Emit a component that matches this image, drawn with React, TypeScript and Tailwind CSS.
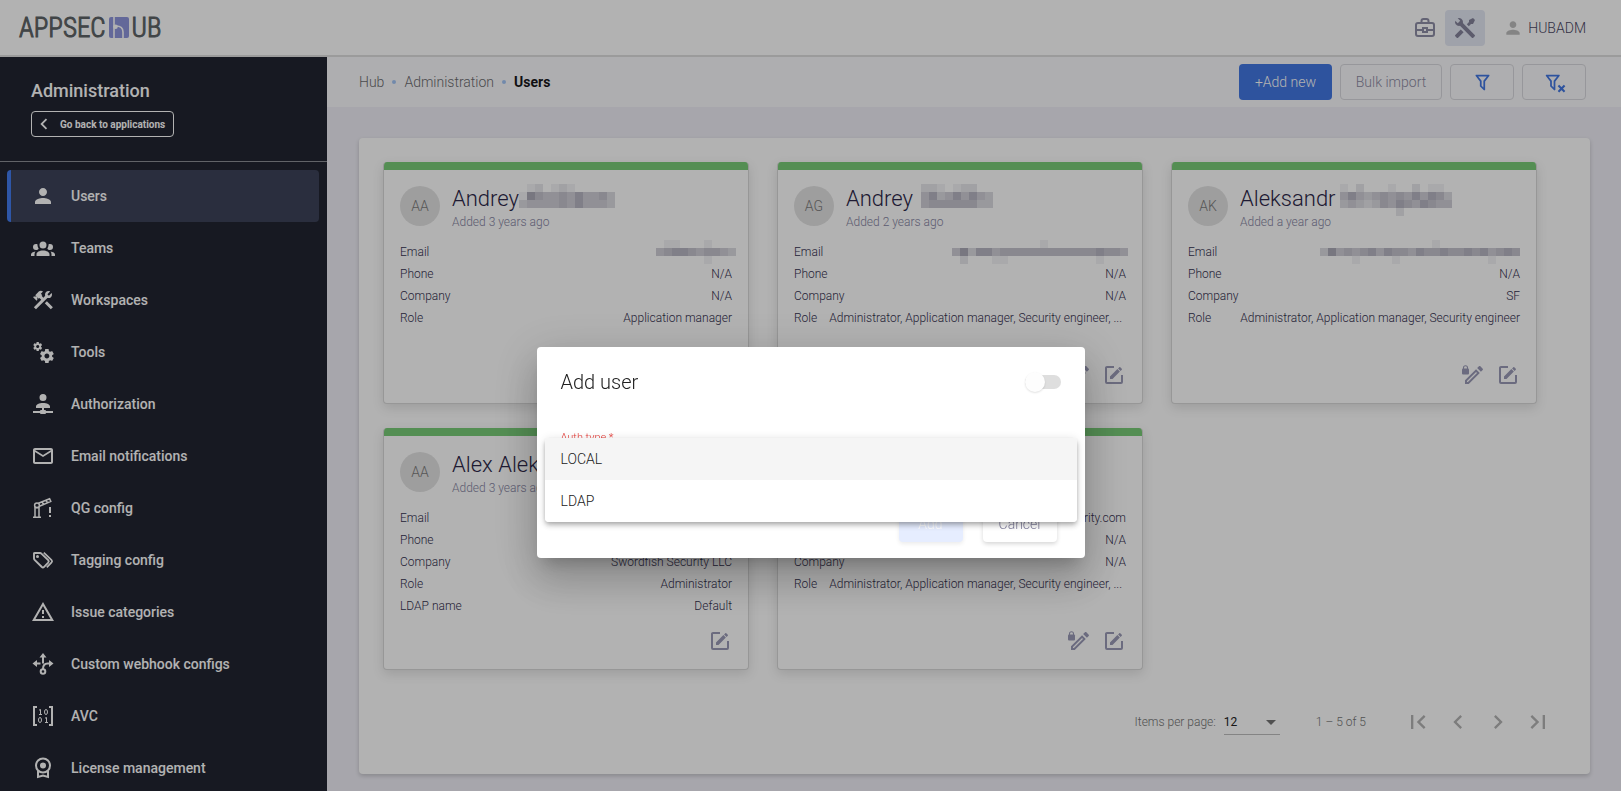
import { useState } from "react";
import type { ReactNode } from "react";
import {
  MdArrowDropDown,
  MdChevronLeft,
  MdChevronRight,
  MdFirstPage,
  MdLastPage,
  MdPerson,
  MdMailOutline,
} from "react-icons/md";

/* ---------- icons ---------- */

function Glyph({ d, size = 24, children }: { d?: string; size?: number; children?: ReactNode }) {
  return (
    <svg viewBox="0 0 24 24" width={size} height={size} fill="currentColor" aria-hidden="true" className="shrink-0">
      {d ? <path d={d} /> : null}
      {children}
    </svg>
  );
}

const ACCOUNT_GROUP =
  "M12,5.5A3.5,3.5 0 0,1 15.5,9A3.5,3.5 0 0,1 12,12.5A3.5,3.5 0 0,1 8.5,9A3.5,3.5 0 0,1 12,5.5M5,8C5.56,8 6.08,8.15 6.53,8.42C6.38,9.85 6.8,11.27 7.66,12.38C7.16,13.34 6.16,14 5,14A3,3 0 0,1 2,11A3,3 0 0,1 5,8M19,8A3,3 0 0,1 22,11A3,3 0 0,1 19,14C17.84,14 16.84,13.34 16.34,12.38C17.2,11.27 17.62,9.85 17.47,8.42C17.92,8.15 18.44,8 19,8M5.5,18.25C5.5,16.18 8.41,14.5 12,14.5C15.59,14.5 18.5,16.18 18.5,18.25V20H5.5V18.25M0,20V18.5C0,17.11 1.89,15.94 4.45,15.6C3.86,16.28 3.5,17.22 3.5,18.25V20H0M24,20H20.5V18.25C20.5,17.22 20.14,16.28 19.55,15.6C22.11,15.94 24,17.11 24,18.5V20Z";
const HAMMER_WRENCH =
  "M13.78 15.3L19.78 21.3L21.89 19.14L15.89 13.14L13.78 15.3M17.5 10.1C17.11 10.1 16.69 10.05 16.36 9.91L4.97 21.25L2.86 19.14L10.27 11.74L8.5 9.96L7.78 10.66L6.33 9.25V12.11L5.63 12.81L2.11 9.25L2.81 8.55H5.62L4.22 7.14L7.78 3.58C8.95 2.41 10.83 2.41 12 3.58L9.89 5.74L11.3 7.14L10.59 7.85L12.38 9.63L14.2 7.75C14.06 7.42 14 7 14 6.63C14 4.66 15.56 3.11 17.5 3.11C18.09 3.11 18.61 3.25 19.08 3.53L16.41 6.2L17.91 7.7L20.58 5.03C20.86 5.5 21 6 21 6.63C21 8.55 19.45 10.1 17.5 10.1Z";
const TOOLS =
  "M21.71 20.29L20.29 21.71A1 1 0 0 1 18.88 21.71L7 9.85A3.81 3.81 0 0 1 6 10A4 4 0 0 1 2.22 4.7L4.76 7.24L5.29 6.71L6.71 5.29L7.24 4.76L4.7 2.22A4 4 0 0 1 10 6A3.81 3.81 0 0 1 9.85 7L21.71 18.88A1 1 0 0 1 21.71 20.29M2.29 18.88A1 1 0 0 0 2.29 20.29L3.71 21.71A1 1 0 0 0 5.12 21.71L10.59 16.25L7.76 13.42M20 2L16 4V6L13.83 8.17L15.83 10.17L18 8H20L22 4Z";
const COGS =
  "M15.9,18.45C17.25,18.45 18.35,17.35 18.35,16C18.35,14.65 17.25,13.55 15.9,13.55C14.54,13.55 13.45,14.65 13.45,16C13.45,17.35 14.54,18.45 15.9,18.45M21.1,16.68L22.58,17.84C22.71,17.95 22.75,18.13 22.66,18.29L21.26,20.71C21.17,20.86 21,20.92 20.83,20.86L19.09,20.16C18.73,20.44 18.33,20.67 17.91,20.85L17.64,22.7C17.62,22.87 17.47,23 17.3,23H14.5C14.32,23 14.18,22.87 14.15,22.7L13.89,20.85C13.46,20.67 13.07,20.44 12.71,20.16L10.96,20.86C10.81,20.92 10.62,20.86 10.54,20.71L9.14,18.29C9.05,18.13 9.09,17.95 9.22,17.84L10.7,16.68L10.65,16L10.7,15.31L9.22,14.16C9.09,14.05 9.05,13.86 9.14,13.71L10.54,11.29C10.62,11.13 10.81,11.07 10.96,11.13L12.71,11.84C13.07,11.56 13.46,11.32 13.89,11.15L14.15,9.29C14.18,9.13 14.32,9 14.5,9H17.3C17.47,9 17.62,9.13 17.64,9.29L17.91,11.15C18.33,11.32 18.73,11.56 19.09,11.84L20.83,11.13C21,11.07 21.17,11.13 21.26,11.29L22.66,13.71C22.75,13.86 22.71,14.05 22.58,14.16L21.1,15.31L21.15,16L21.1,16.68M6.69,8.07C7.56,8.07 8.26,7.37 8.26,6.5C8.26,5.63 7.56,4.92 6.69,4.92A1.58,1.58 0 0,0 5.11,6.5C5.11,7.37 5.82,8.07 6.69,8.07M10.03,6.94L11,7.68C11.07,7.75 11.09,7.87 11.03,7.97L10.13,9.53C10.08,9.63 9.96,9.67 9.86,9.63L8.74,9.18L8,9.62L7.81,10.81C7.79,10.92 7.7,11 7.59,11H5.79C5.67,11 5.58,10.92 5.56,10.81L5.4,9.62L4.64,9.18L3.52,9.63C3.41,9.67 3.3,9.63 3.24,9.53L2.34,7.97C2.28,7.87 2.31,7.75 2.39,7.68L3.34,6.94L3.31,6.5L3.34,6.06L2.39,5.32C2.31,5.25 2.28,5.13 2.34,5.03L3.24,3.47C3.3,3.37 3.41,3.33 3.52,3.37L4.63,3.82L5.4,3.38L5.56,2.19C5.58,2.08 5.67,2 5.79,2H7.59C7.7,2 7.79,2.08 7.81,2.19L8,3.38L8.74,3.82L9.86,3.37C9.96,3.33 10.08,3.37 10.13,3.47L11.03,5.03C11.09,5.13 11.07,5.25 11,5.32L10.03,6.06L10.06,6.5L10.03,6.94Z";
const ACCOUNT_NETWORK =
  "M13,16V18H14A1,1 0 0,1 15,19H22V21H15A1,1 0 0,1 14,22H10A1,1 0 0,1 9,21H2V19H9A1,1 0 0,1 10,18H11V16H5V14.5C5,12.57 8.13,11 12,11C15.87,11 19,12.57 19,14.5V16H13M12,2A3.5,3.5 0 0,1 15.5,5.5A3.5,3.5 0 0,1 12,9A3.5,3.5 0 0,1 8.5,5.5A3.5,3.5 0 0,1 12,2Z";
const ALERT = "M12,2L1,21H23M12,6L19.53,19H4.47M11,10V14H13V10M11,16V18H13V16";
const FILTER =
  "M15,19.88C15.04,20.18 14.94,20.5 14.71,20.71C14.32,21.1 13.69,21.1 13.3,20.71L9.29,16.7C9.06,16.47 8.96,16.16 9,15.87V10.75L4.21,4.62C3.87,4.19 3.95,3.56 4.38,3.22C4.57,3.08 4.78,3 5,3H19C19.22,3 19.43,3.08 19.62,3.22C20.05,3.56 20.13,4.19 19.79,4.62L15,10.75V19.88M7.04,5L11,10.06V15.58L13,17.58V10.05L16.96,5H7.04Z";
const EDIT_BOX =
  "M5,3C3.89,3 3,3.89 3,5V19A2,2 0 0,0 5,21H19A2,2 0 0,0 21,19V12H19V19H5V5H12V3H5M17.78,4C17.61,4 17.43,4.07 17.3,4.2L16.08,5.41L18.58,7.91L19.8,6.7C20.06,6.44 20.06,6 19.8,5.75L18.25,4.2C18.12,4.07 17.95,4 17.78,4M15.37,6.12L8,13.5V16H10.5L17.87,8.62L15.37,6.12Z";
const PENCIL =
  "M14.06,9L15,9.94L5.92,19H5V18.08L14.06,9M17.66,3C17.41,3 17.15,3.1 16.96,3.29L15.13,5.12L18.88,8.87L20.71,7.04C21.1,6.65 21.1,6 20.71,5.63L18.37,3.29C18.17,3.09 17.92,3 17.66,3M14.06,6.19L3,17.25V21H6.75L17.81,9.94L14.06,6.19Z";

const BoomGateIcon = () => (
  <Glyph>
    <g fill="none" stroke="currentColor" strokeWidth="1.5">
      <path d="M2 21.2h8M4 21V11.5h4V21" />
      <circle cx="6" cy="9.3" r="2.4" />
      <path d="M7.4 7.2L18.6 2.8l1.2 2.6L8.4 10.2M11 6l1.6 2.2M15 4.4l1.5 2.2" />
    </g>
    <path d="M18 11h2v6h-2zM18 19h2v2h-2z" />
  </Glyph>
);

const TagsIcon = () => (
  <Glyph>
    <g fill="none" stroke="currentColor" strokeWidth="1.9" strokeLinejoin="round">
      <path d="M3 5.2v5.3c0 .5.2 1 .6 1.4l7 6.9c.8.7 1.8.7 2.5 0l4.1-4.1c.7-.8.7-1.8 0-2.5L10.4 5.6A2 2 0 0 0 9 5H4a1 1 0 0 0-1 .8z" />
      <path d="M12.8 4.6L20.6 12.2a1.6 1.6 0 0 1 0 2.2L15.8 19.4" strokeWidth="1.7" />
    </g>
    <circle cx="6.5" cy="8.5" r="1.5" />
  </Glyph>
);

const ForkIcon = () => (
  <Glyph>
    <path d="M12 1L8.5 5.5h7zM1.5 11.500L6 8v7zM22.5 11.500L18 8v7z" />
    <g fill="none" stroke="currentColor" strokeWidth="2">
      <path d="M12 5v6.5M6 11.5h3.5M18 11.500h-1.5C13.5 11.5 12 14 12 17" />
      <circle cx="12" cy="19.5" r="2.3" />
    </g>
  </Glyph>
);

const MatrixIcon = () => (
  <Glyph>
    <path d="M2 2h4v2H4v16h2v2H2zM22 2h-4v2h2v16h-2v2h4z" />
    <g fill="none" stroke="currentColor" strokeWidth="1">
      <ellipse cx="15" cy="8" rx="1.5" ry="2.5" />
      <ellipse cx="9" cy="16" rx="1.5" ry="2.5" />
      <path d="M8 6.200l1.5-.7v5M8 10.500h3M14 14.200l1.5-.7v5M14 18.500h3" />
    </g>
  </Glyph>
);

const LicenseIcon = () => (
  <Glyph>
    <circle cx="12" cy="9.5" r="7" fill="none" stroke="currentColor" strokeWidth="2" />
    <circle cx="12" cy="9.5" r="3" />
    <path d="M7 15v6l5-1.500 5 1.500v-6" fill="none" stroke="currentColor" strokeWidth="2" />
  </Glyph>
);

const ToolboxIcon = () => (
  <Glyph>
    <g fill="none" stroke="currentColor" strokeWidth="2">
      <path d="M8.500 7V5a2 2 0 0 1 2-2h3a2 2 0 0 1 2 2v2" />
      <rect x="3" y="7" width="18" height="13" rx="2" />
      <path d="M3 14h6.500M14.500 14H21" />
      <rect x="10" y="12" width="4" height="4" />
    </g>
  </Glyph>
);

const FilterOffIcon = () => (
  <svg viewBox="0 0 28 24" width="25" height="21" fill="currentColor" aria-hidden="true" className="shrink-0">
    <path d={FILTER} />
    <path d="M18.500 15.500l7 7M25.500 15.500l-7 7" stroke="currentColor" strokeWidth="2.400" />
  </svg>
);

const LockPencilIcon = () => (
  <Glyph d={PENCIL}>
    <rect x="0" y="5.5" width="7" height="6" rx="1" />
    <path d="M1.500 6V4.700a2 2 0 0 1 4 0V6" fill="none" stroke="currentColor" strokeWidth="1.1" />
  </Glyph>
);

const LogoMark = () => (
  <svg viewBox="0 0 20 21" width="20" height="21" aria-hidden="true" className="shrink-0">
    <rect width="20" height="21" rx="2" fill="#8f96dc" />
    <path d="M5 0v21M7 9c4.500 0 7 2 7 6v6" fill="none" stroke="#ffffff" strokeWidth="1.6" />
    <circle cx="6.5" cy="9.7" r="2.3" fill="#ffffff" />
  </svg>
);

/* Mosaic that hides private data: one digit per cell, 0 is clear, 9 is darkest. */
function Mosaic({ rows, className }: { rows: string[]; className?: string }) {
  const cols = rows[0].length;
  return (
    <svg
      width={cols * 8}
      height={rows.length * 8}
      viewBox={`0 0 ${cols} ${rows.length}`}
      shapeRendering="crispEdges"
      aria-hidden="true"
      className={"shrink-0 " + (className ?? "")}
    >
      {rows.flatMap((row, y) =>
        row
          .split("")
          .map((c, x) =>
            c === "0" ? null : (
              <rect key={`${x}-${y}`} x={x} y={y} width="1" height="1" fill="#55536f" fillOpacity={Number(c) * 0.07} />
            ),
          ),
      )}
    </svg>
  );
}

/* ---------- data ---------- */

const NAV: { label: string; icon: ReactNode }[] = [
  { label: "Users", icon: <MdPerson size={24} /> },
  { label: "Teams", icon: <Glyph d={ACCOUNT_GROUP} /> },
  { label: "Workspaces", icon: <Glyph d={HAMMER_WRENCH} /> },
  { label: "Tools", icon: <Glyph d={COGS} /> },
  { label: "Authorization", icon: <Glyph d={ACCOUNT_NETWORK} /> },
  { label: "Email notifications", icon: <MdMailOutline size={24} /> },
  { label: "QG config", icon: <BoomGateIcon /> },
  { label: "Tagging config", icon: <TagsIcon /> },
  { label: "Issue categories", icon: <Glyph d={ALERT} /> },
  { label: "Custom webhook configs", icon: <ForkIcon /> },
  { label: "AVC", icon: <MatrixIcon /> },
  { label: "License management", icon: <LicenseIcon /> },
];

type User = {
  initials: string;
  name: string;
  surname?: ReactNode;
  added: string;
  rows: [string, ReactNode][];
  locked?: boolean;
};

const ALL_ROLES = "Administrator, Application manager, Security engineer, ...";

const USERS: User[] = [
  {
    initials: "AA",
    name: "Andrey",
    surname: <Mosaic className="-mt-0.5" rows={["012012100000", "175445464453", "344445464443"]} />,
    added: "Added 3 years ago",
    rows: [
      ["Email", <Mosaic className="-mr-1" rows={["0110001000", "4566545543", "0000001000"]} />],
      ["Phone", "N/A"],
      ["Company", "N/A"],
      ["Role", "Application manager"],
    ],
  },
  {
    initials: "AG",
    name: "Andrey",
    surname: <Mosaic className="-mt-0.5 ml-2" rows={["221012200", "463464643", "455555533"]} />,
    added: "Added 2 years ago",
    rows: [
      ["Email", <Mosaic className="-mr-0.5" rows={["0000000000010000000000", "4736645555555555556554", "0200011000000000001000"]} />],
      ["Phone", "N/A"],
      ["Company", "N/A"],
      ["Role", ALL_ROLES],
    ],
    locked: true,
  },
  {
    initials: "AK",
    name: "Aleksandr",
    surname: (
      <Mosaic className="-mt-0.5 ml-1" rows={["10200010020110", "46434545464653", "34323546546544", "00000002000000"]} />
    ),
    added: "Added a year ago",
    rows: [
      ["Email", <Mosaic rows={["0000000000000010000000000", "3745456465546556556564565", "0000100001000000000001000"]} />],
      ["Phone", "N/A"],
      ["Company", "SF"],
      ["Role", "Administrator, Application manager, Security engineer"],
    ],
    locked: true,
  },
  {
    initials: "AA",
    name: "Alex Alek",
    added: "Added 3 years ago",
    rows: [
      ["Email", ""],
      ["Phone", ""],
      ["Company", "Swordfish Security LLC"],
      ["Role", "Administrator"],
      ["LDAP name", "Default"],
    ],
  },
  {
    initials: "",
    name: "",
    added: "",
    rows: [
      ["Email", "security.com"],
      ["Phone", "N/A"],
      ["Company", "N/A"],
      ["Role", ALL_ROLES],
    ],
    locked: true,
  },
];

/* ---------- parts ---------- */

function Header() {
  return (
    <header className="flex h-[57px] shrink-0 items-center border-b-2 border-[#dedede] bg-white pr-[35px] pl-[19px]">
      <a
        href="#home"
        aria-label="AppSec Hub"
        className="flex items-center gap-[3px] font-['Liberation_Sans_Narrow','Roboto_Condensed',Roboto,sans-serif] text-[27px] leading-6 text-[#5d6366] [-webkit-text-stroke:1px_#5d6366]"
      >
        APPSEC
        <LogoMark />
        UB
      </a>
      <div className="ml-auto flex items-center text-[#8f8ea6]">
        <button type="button" aria-label="Workspaces" className="flex h-9 w-10 items-center justify-center">
          <ToolboxIcon />
        </button>
        <button
          type="button"
          aria-label="Administration"
          className="flex h-9 w-10 items-center justify-center rounded bg-[#e4e8f4] text-[#84839b]"
        >
          <Glyph d={TOOLS} />
        </button>
        <button type="button" className="ml-[18px] flex items-center gap-[5px] text-sm text-[#4b4763]">
          <MdPerson size={20} className="text-[#bdbdbd]" />
          HUBADM
        </button>
      </div>
    </header>
  );
}

function Sidebar() {
  return (
    <aside className="flex w-[327px] shrink-0 flex-col overflow-hidden bg-[#222532] text-white">
      <div className="border-b border-[#8c8f96] px-[31px] pt-5 pb-6">
        <h1 className="text-lg leading-7 font-medium">Administration</h1>
        <button
          type="button"
          className="mt-1.5 flex h-[26px] w-[143px] items-center rounded border border-white pl-px text-[10px] font-bold"
        >
          <MdChevronLeft size={22} />
          <span className="ml-[5px]">Go back to applications</span>
        </button>
      </div>
      <nav className="flex flex-col pt-2 pr-2 pl-[7px]">
        {NAV.map((item, i) => (
          <a
            key={item.label}
            href="#section"
            aria-current={i === 0 ? "page" : undefined}
            className={
              "flex h-[52px] shrink-0 items-center gap-4 rounded border-l-4 pl-5 text-sm font-medium " +
              (i === 0 ? "border-[#427bf0] bg-[#3d4359]" : "border-transparent")
            }
          >
            {item.icon}
            {item.label}
          </a>
        ))}
      </nav>
    </aside>
  );
}

const OUTLINE = "flex h-9 items-center justify-center rounded border border-[#d9d9de] text-sm text-[#8d8ca4]";

function Toolbar() {
  return (
    <div className="flex h-[50px] shrink-0 items-center bg-[#fafafc] pr-[35px] pl-8">
      <nav aria-label="Breadcrumb" className="flex items-center gap-2 text-sm text-[#6c6c70]">
        <a href="#hub">Hub</a>
        <span className="size-1 rounded-full bg-[#a3c4f5]" />
        <a href="#administration">Administration</a>
        <span className="size-1 rounded-full bg-[#a3c4f5]" />
        <span className="font-bold text-[#18181b]">Users</span>
      </nav>
      <div className="ml-auto flex gap-2">
        <button type="button" className="h-9 w-[93px] rounded bg-[#4277e2] text-sm text-white">
          +Add new
        </button>
        <button type="button" className={OUTLINE + " w-[102px]"}>
          Bulk import
        </button>
        <button type="button" aria-label="Filter" className={OUTLINE + " w-16"}>
          <span className="text-[#4277e2]">
            <Glyph d={FILTER} size={21} />
          </span>
        </button>
        <button type="button" aria-label="Clear filter" className={OUTLINE + " w-16"}>
          <span className="text-[#4277e2]">
            <FilterOffIcon />
          </span>
        </button>
      </div>
    </div>
  );
}

function UserCard({ user }: { user: User }) {
  return (
    <article className="mr-7 flex min-h-[242px] flex-col overflow-hidden rounded border border-t-0 border-[#d8d8d8] bg-white text-xs shadow-[0_4px_12px_rgba(0,0,0,0.12)]">
      <div className="h-2 bg-[#79cc78]" />
      <div className="flex grow flex-col p-4">
        <div className="flex h-12 items-start gap-3">
          <span className="flex size-10 items-center justify-center rounded-full bg-[#e3e3e3] text-sm text-[#7d7d7d]">
            {user.initials}
          </span>
          <div>
            <h2 className="flex h-[26px] items-start text-[22px] leading-[26px] text-[#2d2749]">
              {user.name}
              {user.surname}
            </h2>
            <p className="h-5 leading-5 text-[#8685a3]">{user.added}</p>
          </div>
        </div>
        <dl className="mt-[7px] text-[#353150]">
          {user.rows.map(([label, value]) => (
            <div key={label} className="flex h-[22px] items-center justify-between gap-3">
              <dt>{label}</dt>
              <dd className={value === ALL_ROLES ? "grow whitespace-nowrap" : "whitespace-nowrap"}>{value}</dd>
            </div>
          ))}
        </dl>
        <div className="mt-auto flex justify-end gap-[10px] text-[#9a9ab6]">
          {user.locked ? (
            <button type="button" aria-label="Change password">
              <LockPencilIcon />
            </button>
          ) : null}
          <button type="button" aria-label="Edit user">
            <Glyph d={EDIT_BOX} />
          </button>
        </div>
      </div>
    </article>
  );
}

function Paginator() {
  const pager = "flex size-10 items-center justify-center";
  return (
    <div className="mt-6 flex h-14 items-center justify-end pr-2 text-xs text-[#757575]">
      <label htmlFor="page-size">Items per page:</label>
      <div className="relative mx-2 w-14 border-b border-[#bdbdbd] text-[#222222]">
        <select id="page-size" defaultValue="12" className="h-6 w-full appearance-none bg-transparent font-normal outline-none">
          <option>12</option>
          <option>24</option>
        </select>
        <MdArrowDropDown size={24} className="pointer-events-none absolute -right-[3px] top-0 text-[#757575]" />
      </div>
      <span className="ml-7">1 – 5 of 5</span>
      <div className="ml-8 flex text-[#b3b3b3]">
        <button type="button" aria-label="First page" className={pager}>
          <MdFirstPage size={28} />
        </button>
        <button type="button" aria-label="Previous page" className={pager}>
          <MdChevronLeft size={28} />
        </button>
        <button type="button" aria-label="Next page" className={pager}>
          <MdChevronRight size={28} />
        </button>
        <button type="button" aria-label="Last page" className={pager}>
          <MdLastPage size={28} />
        </button>
      </div>
    </div>
  );
}

function AddUserDialog() {
  const [enabled, setEnabled] = useState(false);
  const [authType, setAuthType] = useState("LOCAL");
  return (
    <div className="fixed inset-0 flex items-center justify-center bg-black/30 pt-[114px]">
      <section
        role="dialog"
        aria-labelledby="dialog-title"
        className="w-full max-w-[548px] rounded bg-white px-6 pt-4 pb-4 shadow-[0_11px_15px_-7px_rgba(0,0,0,0.2),0_24px_38px_3px_rgba(0,0,0,0.14),0_9px_46px_8px_rgba(0,0,0,0.12)]"
      >
        <div className="flex h-[38px] items-center justify-between">
          <h2 id="dialog-title" className="text-xl text-[#212121]">
            Add user
          </h2>
          <label className="flex h-5 w-9 items-center">
            <input
              type="checkbox"
              aria-label="Enabled"
              checked={enabled}
              onChange={(e) => setEnabled(e.target.checked)}
              className="peer sr-only"
            />
            <span className="flex h-[14px] w-9 items-center rounded-full bg-[#dedede] peer-checked:justify-end">
              <span className="size-5 rounded-full bg-[#fdfdfd] shadow-[0_1px_2px_rgba(0,0,0,0.12)]" />
            </span>
          </label>
        </div>
        <div className="relative mt-[29px]">
          <div id="auth-label" className="text-[11px] leading-4 text-[#e53935]">
            Auth type *
          </div>
          <div className="h-[30px]" />
          <div
            role="listbox"
            aria-labelledby="auth-label"
            className="absolute -right-4 top-2 -left-4 overflow-hidden rounded bg-white shadow-[0_2px_4px_-1px_rgba(0,0,0,0.2),0_4px_5px_0_rgba(0,0,0,0.14),0_1px_10px_0_rgba(0,0,0,0.12)]"
          >
            {["LOCAL", "LDAP"].map((option) => (
              <button
                key={option}
                type="button"
                role="option"
                aria-selected={authType === option}
                onClick={() => setAuthType(option)}
                className={
                  "flex h-[42px] w-full items-center px-4 text-sm text-[#212121] " +
                  (authType === option ? "bg-[#f5f5f5]" : "bg-white")
                }
              >
                {option}
              </button>
            ))}
          </div>
        </div>
        <div className="mt-[30px] flex justify-end gap-5 pr-1 text-sm">
          <button type="button" disabled className="h-9 w-16 rounded bg-[#e6edff] text-white shadow-[0_2px_4px_rgba(0,0,0,0.08)]">
            Add
          </button>
          <button type="button" className="h-9 w-[74px] rounded bg-white text-[#8583a0] shadow-[0_2px_4px_rgba(0,0,0,0.16)]">
            Cancel
          </button>
        </div>
      </section>
    </div>
  );
}

export default function App() {
  return (
    <div className="flex h-screen flex-col overflow-hidden font-[Roboto,sans-serif] font-light">
      <Header />
      <div className="flex min-h-0 grow">
        <Sidebar />
        <main className="flex min-w-0 grow flex-col bg-[#efeef6]">
          <Toolbar />
          <div className="min-h-0 grow overflow-hidden pt-[31px] pr-[31px] pl-8">
            <div className="rounded bg-white p-6 shadow-[0_2px_4px_rgba(0,0,0,0.18)]">
              <div className="grid grid-cols-3 gap-y-6 pr-px">
                {USERS.map((user, i) => (
                  <UserCard key={i} user={user} />
                ))}
              </div>
              <Paginator />
            </div>
          </div>
        </main>
      </div>
      <AddUserDialog />
    </div>
  );
}
